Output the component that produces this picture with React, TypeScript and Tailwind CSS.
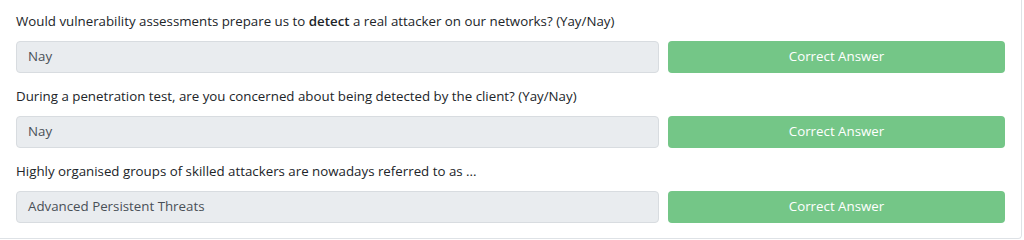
const questions = [
  {
    text: (
      <>
        Would vulnerability assessments prepare us to <b className="font-semibold">detect</b> a real attacker on our networks? (Yay/Nay)
      </>
    ),
    answer: 'Nay',
  },
  {
    text: <>During a penetration test, are you concerned about being detected by the client? (Yay/Nay)</>,
    answer: 'Nay',
  },
  {
    text: <>Highly organised groups of skilled attackers are nowadays referred to as ...</>,
    answer: 'Advanced Persistent Threats',
  },
];

export default function App() {
  return (
    <div className="h-[240px] w-[1024px] bg-white font-['Open_Sans',sans-serif] overflow-hidden">
      <div className="w-[1022px] h-[239px] border-r border-b border-[#dee2e6] rounded-br-[4px] bg-white px-4 pt-[11px]">
        {questions.map((q, i) => (
          <div key={i} className="mb-[13px]">
            <p className="text-[13.3px] leading-[20px] text-[#212529] mb-[10px]">{q.text}</p>
            <div className="flex gap-[9px]">
              <div className="flex-1 h-[32px] rounded-[4px] border border-[#d8dce0] bg-[#e9ecef] px-[11px] flex items-center text-[13.3px] text-[#495057]">
                {q.answer}
              </div>
              <button className="w-[337px] h-[32px] rounded-[4px] bg-[#74c687] text-white text-[13.3px] flex items-center justify-center">
                Correct Answer
              </button>
            </div>
          </div>
        ))}
      </div>
    </div>
  );
}
